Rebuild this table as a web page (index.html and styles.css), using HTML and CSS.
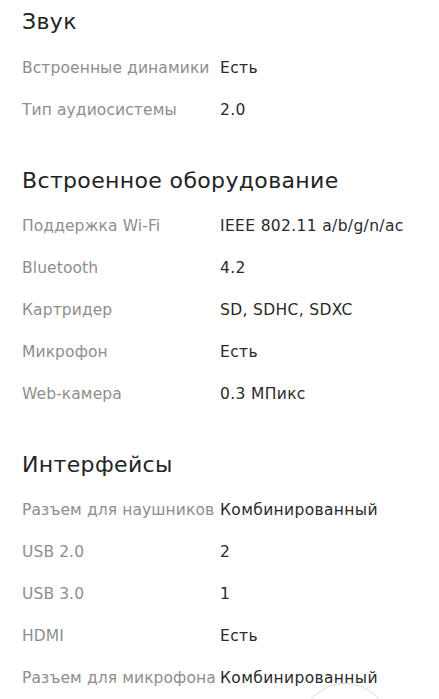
FILE: index.html
```html
<!DOCTYPE html>
<html lang="ru">
<head>
<meta charset="utf-8">
<link rel="stylesheet" href="styles.css">
</head>
<body>
<div class="page">
  <section class="section">
    <h2 class="title">Звук</h2>
    <div class="row"><span class="label">Встроенные динамики</span><span class="value">Есть</span></div>
    <div class="row"><span class="label">Тип аудиосистемы</span><span class="value">2.0</span></div>
  </section>
  <section class="section">
    <h2 class="title">Встроенное оборудование</h2>
    <div class="row"><span class="label">Поддержка Wi-Fi</span><span class="value">IEEE 802.11 a/b/g/n/ac</span></div>
    <div class="row"><span class="label">Bluetooth</span><span class="value">4.2</span></div>
    <div class="row"><span class="label">Картридер</span><span class="value">SD, SDHC, SDXC</span></div>
    <div class="row"><span class="label">Микрофон</span><span class="value">Есть</span></div>
    <div class="row"><span class="label">Web-камера</span><span class="value">0.3 МПикс</span></div>
  </section>
  <section class="section">
    <h2 class="title">Интерфейсы</h2>
    <div class="row"><span class="label">Разъем для наушников</span><span class="value">Комбинированный</span></div>
    <div class="row"><span class="label">USB 2.0</span><span class="value">2</span></div>
    <div class="row"><span class="label">USB 3.0</span><span class="value">1</span></div>
    <div class="row"><span class="label">HDMI</span><span class="value">Есть</span></div>
    <div class="row"><span class="label">Разъем для микрофона</span><span class="value">Комбинированный</span></div>
  </section>
</div>
<div class="fab"></div>
</body>
</html>
```
FILE: styles.css
```css
html, body {
  margin: 0;
  padding: 0;
  background: #ffffff;
  overflow: hidden;
  height: 699px;
}
body {
  font-family: "DejaVu Sans", "Noto Sans", sans-serif;
  color: #2a2a2a;
}
.page {
  padding: 8px 22px 0 22px;
  display: flex;
  flex-direction: column;
  gap: 36px;
}
.section {
  display: flex;
  flex-direction: column;
}
.title {
  margin: 0 0 11px 0;
  font-size: 22px;
  line-height: 28px;
  letter-spacing: 0.35px;
  font-weight: normal;
  color: #222325;
}
.row {
  display: grid;
  grid-template-columns: 198px 1fr;
  height: 41.8px;
  align-items: center;
  font-size: 15.5px;
  letter-spacing: 0.35px;
  white-space: nowrap;
}
.label {
  color: #8e8e8e;
  letter-spacing: 0.1px;
}
.value {
  color: #2a2a2a;
}
.fab {
  position: absolute;
  left: 300px;
  top: 683px;
  width: 90px;
  height: 90px;
  border-radius: 50%;
  border: 1px solid #dcdcdc;
  box-sizing: border-box;
}
```
